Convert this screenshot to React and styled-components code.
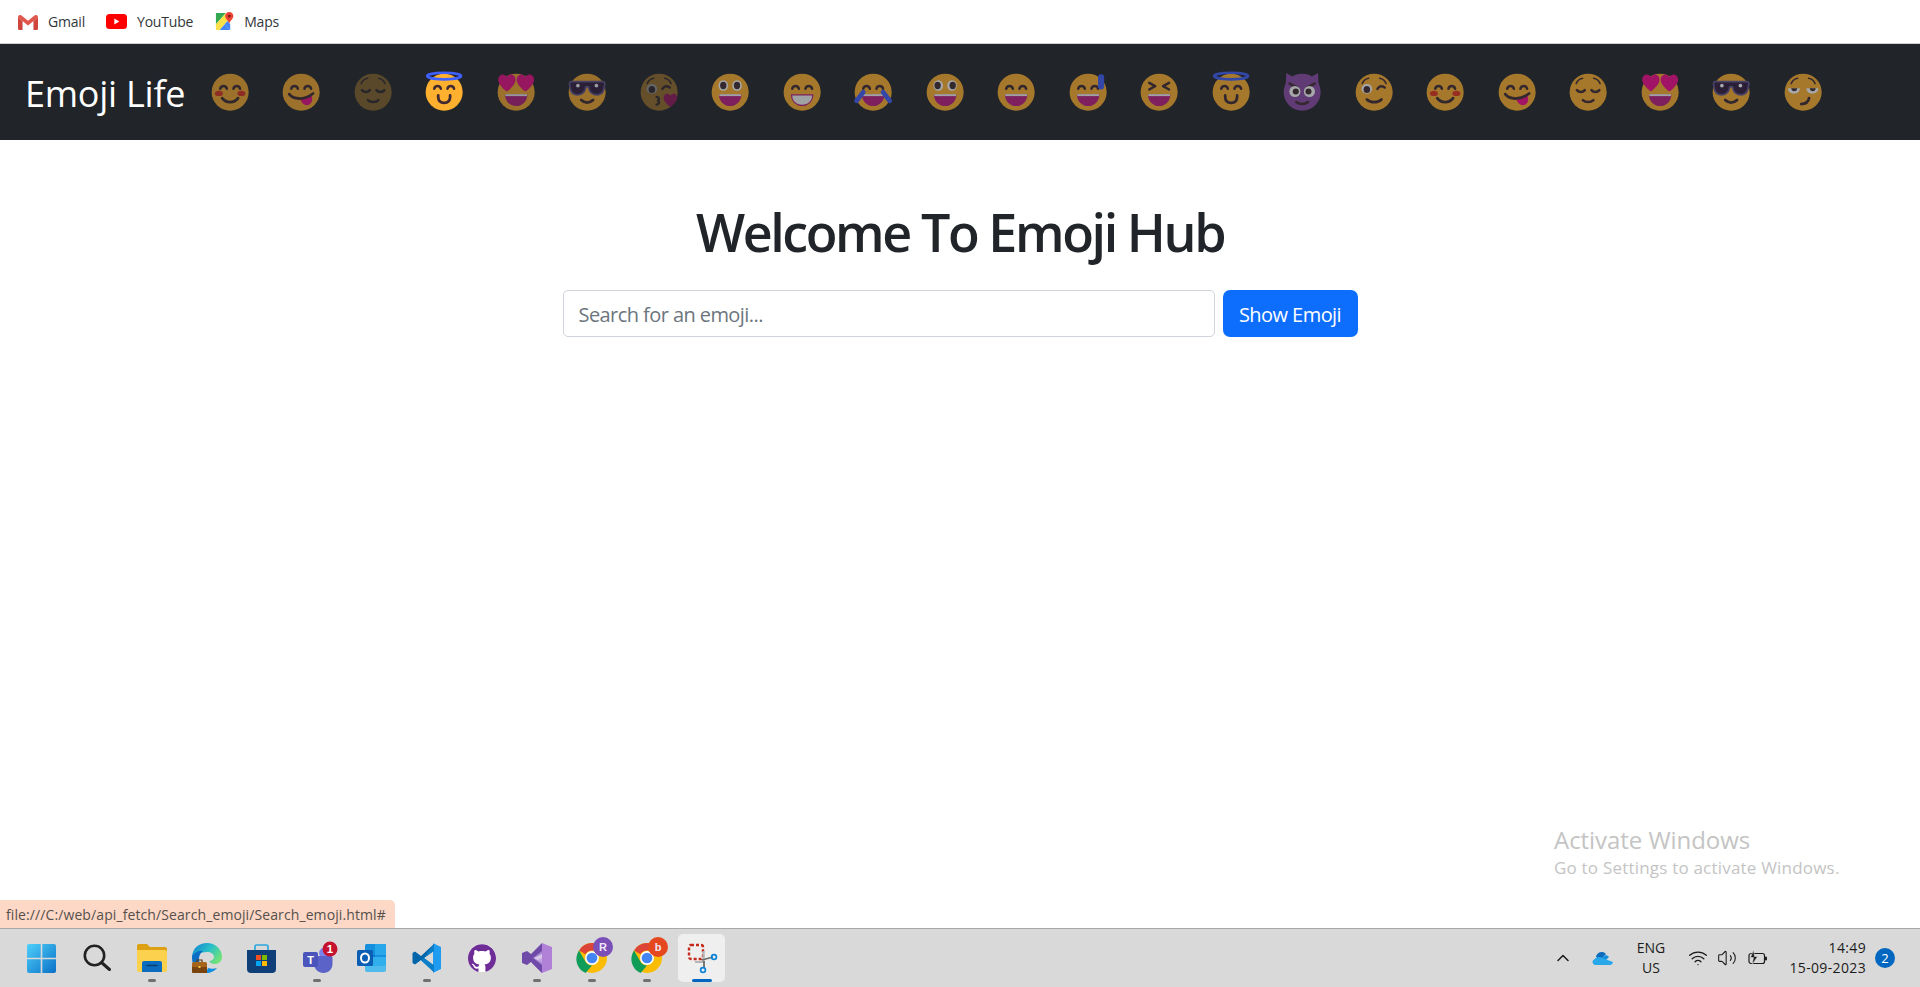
import React from "react";
import styled, { createGlobalStyle } from "styled-components";
import { ChevronUp, Wifi, Volume2 } from "lucide-react";
import { SiGithub } from "react-icons/si";

const UI = `"Open Sans", "Noto Sans", "Liberation Sans", sans-serif`;

const Global = createGlobalStyle`
  html, body { margin: 0; padding: 0; background: #fff; }
  body { font-family: ${UI}; color: #212529; overflow: hidden; }
  * { box-sizing: border-box; }
`;

const Page = styled.div`
  position: relative;
  height: 987px;
  display: flex;
  flex-direction: column;
`;

const BookmarkBar = styled.div`
  height: 44px;
  flex: none;
  display: flex;
  align-items: center;
  padding-left: 18px;
  background: #fff;
  border-bottom: 1px solid #d0d0d0;
`;
const Bookmark = styled.a`
  display: flex;
  align-items: center;
  gap: 10px;
  margin-right: ${p => p.$gap}px;
  font-size: 14px;
  letter-spacing: -0.2px;
  color: #33373a;
  white-space: nowrap;
`;

const Navbar = styled.nav`
  height: 96px;
  flex: none;
  display: flex;
  align-items: center;
  padding-left: 25px;
  background: #212529;
`;
const Brand = styled.a`
  width: 184px;
  flex: none;
  padding-top: 2px;
  font-size: 36px;
  letter-spacing: -0.25px;
  color: #fff;
  white-space: nowrap;
`;
const EmojiRow = styled.div`
  display: flex;
  gap: 29.2px;
`;
const EmojiSvg = styled.svg`
  width: 42.3px;
  height: 42.3px;
  flex: none;
  overflow: visible;
  opacity: ${p => p.$dim};
`;

const Main = styled.main`
  flex: 1;
  display: flex;
  flex-direction: column;
  align-items: center;
  padding-top: 58px;
`;
const Title = styled.h1`
  margin: 0 0 25px;
  font-size: 52px;
  line-height: 67px;
  font-weight: 600;
  letter-spacing: -2.4px;
  color: #212529;
`;
const SearchForm = styled.form`
  width: 795px;
  display: flex;
  gap: 8px;
`;
const SearchInput = styled.input`
  flex: 1;
  min-width: 0;
  height: 47px;
  padding: 2px 14px 0 15px;
  border: 1px solid #ced4da;
  border-radius: 5px;
  font-family: ${UI};
  font-size: 20px;
  letter-spacing: -0.57px;
  color: #212529;
  &::placeholder { color: #6c757d; opacity: 1; }
`;
const ShowButton = styled.button`
  width: 135px;
  height: 47px;
  flex: none;
  border: 0;
  border-radius: 7px;
  background: #0d6efd;
  color: #fff;
  font-family: ${UI};
  font-size: 20px;
  letter-spacing: -0.55px;
  padding: 2px 0 0;
`;

const StatusBubble = styled.div`
  position: absolute;
  left: 0;
  bottom: 59px;
  height: 28px;
  width: 395px;
  display: flex;
  align-items: center;
  padding-left: 6px;
  background: #fdd8c6;
  border-top-right-radius: 5px;
  font-size: 14px;
  letter-spacing: 0.1px;
  color: #55504c;
  white-space: nowrap;
`;
const Watermark = styled.div`
  position: absolute;
  left: 1554px;
  top: 824px;
  color: #c4c4c4;
  white-space: nowrap;
`;
const WatermarkTitle = styled.div`
  font-size: 24px;
  line-height: 32px;
  letter-spacing: -0.05px;
`;
const WatermarkNote = styled.div`
  font-size: 17px;
  line-height: 24px;
  letter-spacing: 0.2px;
`;

const Taskbar = styled.footer`
  height: 59px;
  flex: none;
  display: flex;
  align-items: center;
  justify-content: space-between;
  padding-left: 18px;
  background: #d9d9d9;
  border-top: 1px solid #a8a8a8;
`;
const Apps = styled.div`
  display: flex;
  gap: 8px;
`;
const AppButton = styled.div`
  position: relative;
  width: 47px;
  height: 48px;
  display: flex;
  align-items: center;
  justify-content: center;
  border-radius: 5px;
  background: ${p => (p.$active ? "#efefef" : "transparent")};
`;
const AppSvg = styled.svg`
  width: ${p => p.$size || 32}px;
  height: ${p => p.$size || 32}px;
  overflow: visible;
  flex: none;
`;
const Pip = styled.span`
  position: absolute;
  bottom: 0;
  left: 50%;
  transform: translateX(-50%);
  width: ${p => (p.$active ? 20 : 8)}px;
  height: 3.5px;
  border-radius: 2px;
  background: ${p => (p.$active ? "#0067c0" : "#707070")};
`;
const GithubDisc = styled.div`
  width: 28px;
  height: 28px;
  border-radius: 50%;
  background: #fff;
  display: flex;
`;

const Tray = styled.div`
  display: flex;
  align-items: center;
  color: #1c1c1c;
  font-size: 14px;
`;
const TraySlot = styled.div`
  display: flex;
  align-items: center;
  justify-content: center;
  width: ${p => p.$w}px;
  flex: none;
`;
const Lang = styled.div`
  width: 50px;
  text-align: center;
  line-height: 20px;
  margin: 0 12px 0 3px;
`;
const Clock = styled.div`
  width: 96px;
  text-align: right;
  line-height: 20px;
  letter-spacing: 0.35px;
  white-space: nowrap;
`;
const CountBadge = styled.div`
  width: 20px;
  height: 20px;
  margin: 0 25px 0 9px;
  border-radius: 50%;
  background: #0067c0;
  color: #fff;
  font-size: 13px;
  display: flex;
  align-items: center;
  justify-content: center;
`;

const INK = "#402a32";
const Stroke = { fill: "none", stroke: INK, strokeWidth: 1.9, strokeLinecap: "round" };

const ArcEyes = () => (
  <path d="M8.5 13.5c.6-2.8 4.4-2.8 5 0M18.5 13.5c.6-2.8 4.4-2.8 5 0" {...Stroke} />
);
const Brows = () => <path d="M7 9.5c.8-2 2.6-3.6 4.8-4M25 9.5c-.8-2-2.6-3.6-4.8-4" {...Stroke} strokeWidth={1.2} />;
const OpenMouth = ({ teeth }) => (
  <>
    <path d="M7.5 17.5h17c0 5-3.600 9-8.500 9s-8.500-4-8.500-9z" fill="#bb1d80" />
    {teeth ? <path d="M8.500 18.500h15c0 4-3 7-7.500 7s-7.500-3-7.500-7z" fill="#f4f4f4" /> : <path d="M7.800 17.500h16.400v1.500H7.800z" fill="#f4f4f4" />}
  </>
);
const Heart = ({ x, y, s = 1 }) => (
  <path transform={`translate(${x} ${y}) scale(${s})`} d="M0 7C-6 2.500-6.500-1-5-3c1.500-2 4-1.500 5 .5 1-2 3.500-2.500 5-.5 1.500 2 1 5.500-5 10z" fill="#f70a8d" />
);
const WideEyes = ({ wide }) => (
  <>
    <ellipse cx="10.800" cy="11" rx="3.600" ry="4" fill="#fff" />
    <ellipse cx="21.200" cy="11" rx="3.600" ry="4" fill="#fff" />
    <ellipse cx={wide ? 10.300 : 10.800} cy="11" rx="2.400" ry="2.800" fill={INK} />
    <ellipse cx={wide ? 21.700 : 21.200} cy="11" rx="2.400" ry="2.800" fill={INK} />
  </>
);
const Halo = () => <ellipse cx="16" cy="3.800" rx="12.800" ry="2.500" fill="none" stroke="#3f5fff" strokeWidth="2" />;
const Shades = () => (
  <>
    <path d="M4 8h24c1 0 1.500 1 1.300 2-.4 4-1 8-6.300 8-4 0-5.500-3-6-6h-2c-.5 3-2 6-6 6-5.300 0-5.900-4-6.300-8C2.500 9 3 8 4 8z" fill="#321b41" stroke="#635994" strokeWidth="1.300" />
    <circle cx="9" cy="11" r="1.400" fill="#fff" />
    <circle cx="23" cy="11" r="1.400" fill="#fff" />
  </>
);
const Relieved = () => (
  <>
    <Brows />
    <path d="M7.500 14.500c1.500 1.800 4.500 1.800 6 0M18.500 14.500c1.500 1.800 4.500 1.800 6 0" {...Stroke} />
    <path d="M12 22c2 2 6 2 8 0" {...Stroke} />
  </>
);
const Smile = () => <path d="M10 20.500c3 4 9 4 12 0" {...Stroke} strokeWidth={2.100} />;
const WinkEye = () => <path d="M18.500 13.500c1.500-2.500 4-2.500 5.500-1" {...Stroke} />;

const FACES = {
  blush: { body: <><ArcEyes /><ellipse cx="7.500" cy="17" rx="3" ry="2" fill="#e8351f" /><ellipse cx="24.500" cy="17" rx="3" ry="2" fill="#e8351f" /><Smile /></> },
  yum: { body: <><ArcEyes /><path d="M15.500 21.500l8-3.500c1.500 3 1 6-1.500 7.500-3 1.200-5.500-1-6.500-4z" fill="#f70a8d" /><path d="M7 17.500c3 4 11 5 18-.5" {...Stroke} strokeWidth={2.100} /></> },
  relieved: { body: <Relieved /> },
  halo: { top: <Halo />, body: <><ArcEyes /><path d="M11.500 18.500v1c0 3 1.800 4.700 4.500 4.700s4.500-1.700 4.500-4.700v-1" {...Stroke} strokeWidth={2.100} /></> },
  hearts: { body: <><OpenMouth /><Heart x={9} y={7.500} s={1.150} /><Heart x={23} y={7.500} s={1.150} /></> },
  shades: { body: <><Shades /><path d="M11.500 22c2.500 2.500 6.500 2.500 9 0" {...Stroke} strokeWidth={2.100} /></> },
  kiss: { body: <><Brows /><ellipse cx="10.500" cy="13.500" rx="4" ry="3.700" fill="#fff" /><ellipse cx="10.500" cy="14" rx="2.500" ry="2.700" fill={INK} /><WinkEye /><path d="M14 19.500c2.500.5 2.500 2.500.5 3 2 .5 2 2.500-.5 3" {...Stroke} strokeWidth={1.700} /><Heart x={24.500} y={21} s={.9} /></> },
  eyes: { body: <><WideEyes /><OpenMouth /></> },
  teeth: { body: <><ArcEyes /><OpenMouth teeth /></> },
  joy: { body: <><ArcEyes /><OpenMouth /><path d="M3.500 22.500l5-6.500M28.500 22.500l-5-6.500" stroke="#3f5fff" strokeWidth="3.600" strokeLinecap="round" /></> },
  wide: { body: <><WideEyes wide /><OpenMouth /></> },
  grin: { body: <><ArcEyes /><OpenMouth /></> },
  sweat: { body: <><ArcEyes /><OpenMouth /><rect x="23.500" y="2.500" width="4.600" height="11.500" rx="2.300" fill="#3f5fff" /></> },
  xd: { body: <><path d="M8.500 9l4.500 2.500-4.500 2.500M23.500 9L19 11.500l4.500 2.500" {...Stroke} strokeLinejoin="round" /><OpenMouth /></> },
  devil: { face: "#8d4aa8", top: <path d="M3.500 12L4 1.500l7 4zM28.500 12L28 1.500l-7 4z" fill="#8d4aa8" />, body: <><path d="M6.500 9.500l6 3M25.500 9.500l-6 3" {...Stroke} /><circle cx="10.500" cy="15.500" r="4.200" fill="#fff" /><circle cx="21.500" cy="15.500" r="4.200" fill="#fff" /><circle cx="11.200" cy="15.500" r="2.300" fill={INK} /><circle cx="20.800" cy="15.500" r="2.300" fill={INK} /><path d="M11.500 23.500c2.500 2 6.500 2 9 0" {...Stroke} /></> },
  wink: { body: <><Brows /><ellipse cx="10.500" cy="13.500" rx="4" ry="3.700" fill="#fff" /><ellipse cx="10.500" cy="14" rx="2.500" ry="2.700" fill={INK} /><WinkEye /><path d="M10.500 21.500c3 2.800 8 2.800 11 0" {...Stroke} strokeWidth={2.100} /></> },
  smirk: { body: <><Brows /><path d="M4.500 13h9c0 2.500-2 4-4.500 4s-4.500-1.500-4.500-4zM18.500 13h9c0 2.500-2 4-4.500 4s-4.500-1.500-4.500-4z" fill="#fff" /><path d="M7 13h4.500c0 1.500-1 2.300-2.200 2.300S7 14.500 7 13zM21 13h4.500c0 1.500-1 2.300-2.200 2.300S21 14.500 21 13z" fill={INK} /><path d="M14.500 25c3 0 5.500-1.500 6-4.500" {...Stroke} strokeWidth={2.100} /></> },
};

const NAV_EMOJIS = [
  ["blush", .55], ["yum", .55], ["relieved", .25], ["halo", 1], ["hearts", .55], ["shades", .55],
  ["kiss", .3], ["eyes", .6], ["teeth", .6], ["joy", .6], ["wide", .6], ["grin", .6],
  ["sweat", .6], ["xd", .6], ["halo", .6], ["devil", .6], ["wink", .6], ["blush", .6],
  ["yum", .6], ["relieved", .6], ["hearts", .6], ["shades", .6], ["smirk", .6],
];

function Emoji({ kind, dim }) {
  const f = FACES[kind];
  return (
    <EmojiSvg viewBox="0 0 32 32" $dim={dim}>
      {f.top && kind === "devil" ? f.top : null}
      <circle cx="16" cy="16" r="14" fill={f.face || "#ffb02e"} />
      {f.top && kind !== "devil" ? f.top : null}
      {f.body}
    </EmojiSvg>
  );
}

const GmailIcon = () => (
  <AppSvg viewBox="0 0 20 16" $size={20}>
    <path d="M1 15V2.500L10 9.500l9-7V15h-3.500V7L10 11.500 4.500 7v8z" fill="#e8e8e8" />
    <path d="M0 3.500C0 1 2 .5 3.500 1.500L10 6.800l6.500-5.300C18 .5 20 1 20 3.500L15.500 7 10 11.500 4.500 7z" fill="#e2574c" />
    <path d="M0 3.500V14.500c0 .8.600 1.500 1.300 1.500h3.200V7z" fill="#d0463c" />
    <path d="M20 3.500V14.500c0 .8-.6 1.500-1.300 1.500h-3.200V7z" fill="#d0463c" />
  </AppSvg>
);
const YoutubeIcon = () => (
  <AppSvg viewBox="0 0 21 15" $size={21}>
    <rect width="21" height="15" rx="3.500" fill="#f00" />
    <path d="M8.300 4.500v6l5-3z" fill="#fff" />
  </AppSvg>
);
const MapsIcon = () => (
  <AppSvg viewBox="0 0 20 20" $size={19}>
    <path d="M1 1h10.500L1 13z" fill="#34a853" />
    <path d="M1 13L11.500 1l3 7L5 19H1z" fill="#fbe04a" />
    <path d="M5 19l5.200-6L16 19z" fill="#4285f4" />
    <path d="M10.200 13l3-3.500L16 13v6z" fill="#4285f4" />
    <path d="M15 0c-2.600 0-4.300 2-4.300 4.200C10.700 7 14 9 15 12c1-3 4.300-5 4.300-7.800C19.300 2 17.600 0 15 0z" fill="#ea4335" />
    <circle cx="15" cy="4.300" r="1.500" fill="#7d1c14" />
  </AppSvg>
);

const WinIcon = () => (
  <AppSvg viewBox="0 0 29 29" $size={29}>
    <defs>
      <linearGradient id="win" x1="0" y1="0" x2="1" y2="1"><stop offset="0" stopColor="#4ed0fb" /><stop offset="1" stopColor="#0a70c6" /></linearGradient>
    </defs>
    <path d="M2 0h11.700v13.700H0V2a2 2 0 0 1 2-2zM15.300 0H27a2 2 0 0 1 2 2v11.700H15.300zM0 15.300h13.700V29H2a2 2 0 0 1-2-2zM15.300 15.300H29V27a2 2 0 0 1-2 2H15.300z" fill="url(#win)" />
  </AppSvg>
);
const SearchIcon = () => (
  <AppSvg viewBox="0 0 28 28" $size={28}>
    <circle cx="11.500" cy="11.500" r="9.700" fill="none" stroke="#222" strokeWidth="2.600" />
    <path d="M18.500 18.500l8 7" stroke="#222" strokeWidth="3" strokeLinecap="round" />
  </AppSvg>
);
const FolderIcon = () => (
  <AppSvg viewBox="0 0 30 28" $size={30}>
    <path d="M0 2a2 2 0 0 1 2-2h8l3 3h15a2 2 0 0 1 2 2v4H0z" fill="#dea013" />
    <path d="M0 6h28a2 2 0 0 1 2 2v18a2 2 0 0 1-2 2H2a2 2 0 0 1-2-2z" fill="#fcd14d" />
    <path d="M5 28v-9a2 2 0 0 1 2-2h16a2 2 0 0 1 2 2v9z" fill="#0c6cc0" />
    <path d="M10 21.500h10" stroke="#0a3f73" strokeWidth="1.600" strokeLinecap="round" />
  </AppSvg>
);
const EdgeIcon = () => (
  <AppSvg viewBox="0 0 30 30" $size={30}>
    <defs>
      <linearGradient id="edg" x1="0" y1="0" x2="1" y2=".6"><stop offset="0" stopColor="#0c7fd0" /><stop offset=".55" stopColor="#2ac0c8" /><stop offset="1" stopColor="#6fe17a" /></linearGradient>
    </defs>
    <path d="M0 13C1 5 7 0 15 0c8 0 15 6 15 14 0 4-3 7-7 7-3 0-5-1-6-3 3 0 5-2 5-4 0-3-3-5-7-5-6 0-11 3-15 4z" fill="url(#edg)" />
    <path d="M0 13c3-4 7-6 11-5-3 2-4 5-4 8 0 6 5 12 13 12-2 1-3 2-6 2C6 30 0 23 0 15z" fill="#0c6dc4" />
    <path d="M14 30c3 0 8-1 11-5-3 1-6 1-9 0z" fill="#0f8de0" />
    <rect x="0" y="19" width="15" height="11" rx="1.500" fill="#a5641a" />
    <path d="M0 24h15v6H1.500A1.500 1.500 0 0 1 0 28.500z" fill="#7a4410" />
    <path d="M5 19v-2h5v2" fill="none" stroke="#5d3a12" strokeWidth="1.200" />
    <rect x="6.500" y="23" width="2" height="2" fill="#f6c04c" />
  </AppSvg>
);
const StoreIcon = () => (
  <AppSvg viewBox="0 0 29 29" $size={29}>
    <path d="M8 6V2.500A1.500 1.500 0 0 1 9.500 1h10A1.500 1.500 0 0 1 21 2.500V6" fill="none" stroke="#2aa7e0" strokeWidth="1.700" />
    <path d="M0 6h29v19a4 4 0 0 1-4 4H4a4 4 0 0 1-4-4z" fill="#0f3f76" />
    <rect x="9" y="11" width="5" height="5" fill="#f25022" />
    <rect x="15" y="11" width="5" height="5" fill="#7fba00" />
    <rect x="9" y="17" width="5" height="5" fill="#00a4ef" />
    <rect x="15" y="17" width="5" height="5" fill="#ffb900" />
  </AppSvg>
);
const TeamsIcon = () => (
  <AppSvg viewBox="-4 0 36 30" $size={36}>
    <circle cx="21" cy="10" r="5" fill="#7b83eb" />
    <path d="M11 13h17a1.500 1.500 0 0 1 1.500 1.500V21c0 5-4 9-9 9s-9.500-4-9.500-9z" fill="#5b62c8" />
    <rect x="0" y="9" width="15" height="15" rx="2" fill="#4b53bc" />
    <text x="7.500" y="20.500" textAnchor="middle" fontSize="11" fontWeight="700" fill="#fff" fontFamily="Liberation Sans">T</text>
    <circle cx="27" cy="6" r="7.500" fill="#c4122f" />
    <text x="27" y="10" textAnchor="middle" fontSize="11.500" fontWeight="700" fill="#fff" fontFamily="Liberation Sans">1</text>
  </AppSvg>
);
const OutlookIcon = () => (
  <AppSvg viewBox="0 0 30 30" $size={30}>
    <rect x="8" y="1" width="21" height="22" rx="1.500" fill="#1490df" />
    <rect x="18" y="1" width="11" height="11" fill="#28a8ea" />
    <rect x="8" y="12" width="10" height="11" fill="#0f78d4" />
    <path d="M8 14l21 0v13a2 2 0 0 1-2 2H10a2 2 0 0 1-2-2z" fill="#36b5ee" opacity=".85" />
    <rect x="0" y="7" width="16" height="16" rx="1.500" fill="#0a5fb4" />
    <ellipse cx="8" cy="15" rx="4" ry="4.600" fill="none" stroke="#fff" strokeWidth="2" />
  </AppSvg>
);
const CodeIcon = () => (
  <AppSvg viewBox="0 0 30 30" $size={30}>
    <path d="M21 .5a2 2 0 0 1 1.300.3L29 4v22l-6.700 3.200a2 2 0 0 1-1.300.3z" fill="#1f9cf0" />
    <path d="M22 1L9 13 3 8.500.5 10v10L3 21.500 9 17l13 12 0-6.500L12 15l10-7.500z" fill="#0065a9" />
    <path d="M22 .8V8L12 15l10 7.500v6.700l-13-12L12 15z" fill="#0a7fc9" />
  </AppSvg>
);
const VsIcon = () => (
  <AppSvg viewBox="0 0 30 30" $size={30}>
    <path d="M20 0l10 4v22l-10 4-10-10 10-5z" fill="#b180d7" />
    <path d="M20 0v11L12 15l8 5 0 10L9 19l-4 3-5-2V10l5-2 4 3z" fill="#6f4aa8" />
    <path d="M20 8L11 15l9 7z" fill="#d5b8f2" opacity=".55" />
  </AppSvg>
);
const ChromeIcon = ({ badge, color }) => (
  <AppSvg viewBox="0 0 32 32" $size={32}>
    <g transform="translate(16 16) scale(1.07) translate(-14 -18)">
      <circle cx="14" cy="18" r="14" fill="#fbbc04" />
      <path d="M14 4a14 14 0 0 1 12.100 7H14a7 7 0 0 0-6.100 3.500L1.900 11A14 14 0 0 1 14 4z" fill="#db4437" />
      <path d="M1.900 11l6 10.500A7 7 0 0 0 14 25l-6 7A14 14 0 0 1 1.900 11z" fill="#0f9d58" />
      <circle cx="14" cy="18" r="6.500" fill="#fff" />
      <circle cx="14" cy="18" r="5" fill="#4285f4" />
    </g>
    <circle cx="27" cy="5" r="10" fill={color} />
    <text x="27" y="9" textAnchor="middle" fontSize="11" fontWeight="700" fill="#f0e6f5" fontFamily="Liberation Sans">{badge}</text>
  </AppSvg>
);
const SnipIcon = () => (
  <AppSvg viewBox="0 0 30 30" $size={30}>
    <rect x="2" y="2" width="14" height="14" rx="2" fill="none" stroke="#c42b1c" strokeWidth="2.400" strokeDasharray="3 2" />
    <path d="M8 19h8.500V8" fill="none" stroke="#b5b5b5" strokeWidth="2.200" />
    <path d="M15 17l11-3M17 18v7" fill="none" stroke="#6c6c6c" strokeWidth="1.800" />
    <circle cx="27" cy="14" r="2.400" fill="none" stroke="#0f86d8" strokeWidth="1.700" />
    <circle cx="16" cy="27" r="2.400" fill="none" stroke="#0f86d8" strokeWidth="1.700" />
  </AppSvg>
);
const OneDriveIcon = () => (
  <AppSvg viewBox="0 0 20 14" $size={20}>
    <path d="M7 11L3 5.500C4 2 9-1 13 3L9 7z" fill="#0f6cbd" />
    <path d="M9 7c1-3 5-4 7-1l-5 5z" fill="#1490df" />
    <path d="M2 14a3 3 0 0 1-.500-5.800C3 6.500 6 5 9 7l11 4c-.5 2-1.500 3-3 3z" fill="#28a8ea" />
  </AppSvg>
);
const BatteryIcon = () => (
  <AppSvg viewBox="0 0 20 16" $size={20}>
    <rect x="1" y="3.500" width="15.500" height="10" rx="2" fill="none" stroke="#1c1c1c" strokeWidth="1.200" />
    <rect x="17" y="6.500" width="2" height="4" rx="1" fill="#1c1c1c" />
    <path d="M5.500 0L2.500 7.500H5.500L4 15l5.500-8.500H6.500z" fill="#1c1c1c" stroke="#d9d9d9" strokeWidth=".6" />
  </AppSvg>
);

const APPS = [
  { icon: <WinIcon /> },
  { icon: <SearchIcon /> },
  { icon: <FolderIcon />, pip: true },
  { icon: <EdgeIcon /> },
  { icon: <StoreIcon /> },
  { icon: <TeamsIcon />, pip: true },
  { icon: <OutlookIcon /> },
  { icon: <CodeIcon />, pip: true },
  { icon: <GithubDisc><SiGithub size={28} color="#6e2c96" /></GithubDisc> },
  { icon: <VsIcon />, pip: true },
  { icon: <ChromeIcon badge="R" color="#7b4fb8" />, pip: true },
  { icon: <ChromeIcon badge="b" color="#e5481f" />, pip: true },
  { icon: <SnipIcon />, active: true },
];

export default function App() {
  return (
    <Page>
      <Global />
      <BookmarkBar>
        <Bookmark $gap={21}><GmailIcon />Gmail</Bookmark>
        <Bookmark $gap={22}><YoutubeIcon />YouTube</Bookmark>
        <Bookmark $gap={0}><MapsIcon />Maps</Bookmark>
      </BookmarkBar>
      <Navbar>
        <Brand>Emoji Life</Brand>
        <EmojiRow>
          {NAV_EMOJIS.map(([kind, dim], i) => <Emoji key={i} kind={kind} dim={dim} />)}
        </EmojiRow>
      </Navbar>
      <Main>
        <Title>Welcome To Emoji Hub</Title>
        <SearchForm>
          <SearchInput placeholder="Search for an emoji..." />
          <ShowButton type="button">Show Emoji</ShowButton>
        </SearchForm>
      </Main>
      <Watermark>
        <WatermarkTitle>Activate Windows</WatermarkTitle>
        <WatermarkNote>Go to Settings to activate Windows.</WatermarkNote>
      </Watermark>
      <StatusBubble>file:///C:/web/api_fetch/Search_emoji/Search_emoji.html#</StatusBubble>
      <Taskbar>
        <Apps>
          {APPS.map((a, i) => (
            <AppButton key={i} $active={a.active}>
              {a.icon}
              {a.pip && <Pip />}
              {a.active && <Pip $active />}
            </AppButton>
          ))}
        </Apps>
        <Tray>
          <TraySlot $w={40}><ChevronUp size={20} strokeWidth={1.8} /></TraySlot>
          <TraySlot $w={40}><OneDriveIcon /></TraySlot>
          <Lang>ENG<br />US</Lang>
          <TraySlot $w={20}><Wifi size={20} strokeWidth={1.6} /></TraySlot>
          <TraySlot $w={38}><Volume2 size={20} strokeWidth={1.3} /></TraySlot>
          <TraySlot $w={24}><BatteryIcon /></TraySlot>
          <Clock>14:49<br />15-09-2023</Clock>
          <CountBadge>2</CountBadge>
        </Tray>
      </Taskbar>
    </Page>
  );
}
